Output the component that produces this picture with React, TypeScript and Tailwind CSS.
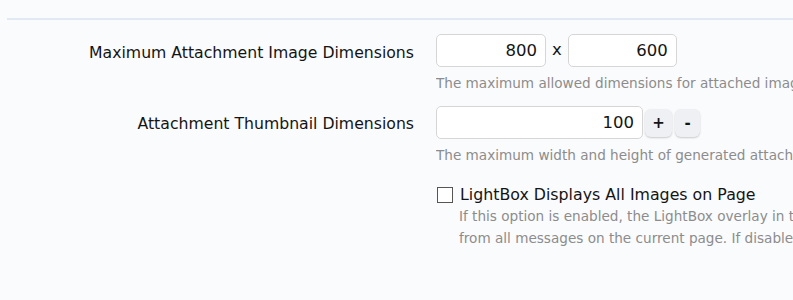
export default function App() {
  return (
    <div className="min-h-[300px] w-[793px] overflow-hidden bg-[#fafbfd] font-['DejaVu_Sans',sans-serif] text-[#141414]">
      <div className="ml-[7px] mt-[18px] h-[2px] bg-[#e1eaf3]" />
      <div className="pt-[14px]">
        <div className="grid grid-cols-[414px_1fr] gap-x-[22px]">
          <div className="pt-[7px] text-right text-[15.7px] whitespace-nowrap">Maximum Attachment Image Dimensions</div>
          <div className="overflow-hidden">
            <div className="flex items-center">
              <div className="h-[33px] w-[110px] rounded-[5px] border border-[#d6d6d6] bg-white px-[8px] text-right text-[16.5px] leading-[31px]">800</div>
              <span className="mx-[6px] text-[16.5px]">x</span>
              <div className="h-[33px] w-[109px] rounded-[5px] border border-[#d6d6d6] bg-white px-[8px] text-right text-[16.5px] leading-[31px]">600</div>
            </div>
            <div className="mt-[6px] whitespace-nowrap text-[13.6px] text-[#8c8c8c]">The maximum allowed dimensions for attached images.</div>
          </div>
        </div>
        <div className="mt-[13px] grid grid-cols-[414px_1fr] gap-x-[22px]">
          <div className="pt-[6px] text-right text-[15.7px] whitespace-nowrap">Attachment Thumbnail Dimensions</div>
          <div className="overflow-hidden">
            <div className="flex items-center">
              <div className="h-[33px] w-[207px] rounded-[5px] border border-[#d6d6d6] bg-white px-[8px] text-right text-[16.5px] leading-[31px]">100</div>
              <button className="ml-[2px] h-[28px] w-[27px] rounded-[6px] bg-[#eef0f4] text-[15px] font-bold shadow-[0_1px_2px_rgba(0,0,0,0.2)]">+</button>
              <button className="ml-[3px] h-[28px] w-[25px] rounded-[6px] bg-[#eef0f4] text-[15px] font-bold shadow-[0_1px_2px_rgba(0,0,0,0.2)]">-</button>
            </div>
            <div className="mt-[6px] whitespace-nowrap text-[13.6px] text-[#8c8c8c]">The maximum width and height of generated attachment thumbnails.</div>
          </div>
        </div>
        <div className="mt-[17px] grid grid-cols-[414px_1fr] gap-x-[22px]">
          <div />
          <div className="overflow-hidden">
            <label className="flex items-center whitespace-nowrap text-[15.8px]">
              <span className="ml-[1px] mr-[7px] inline-block h-[16px] w-[16px] border border-[#555] bg-white" />
              LightBox Displays All Images on Page
            </label>
            <div className="ml-[23px] -mt-[1px] whitespace-nowrap text-[13.6px] leading-[22px] text-[#8c8c8c]">
              If this option is enabled, the LightBox overlay in threads will display images
              <br />
              from all messages on the current page. If disabled, only images from the
            </div>
          </div>
        </div>
      </div>
    </div>
  );
}
